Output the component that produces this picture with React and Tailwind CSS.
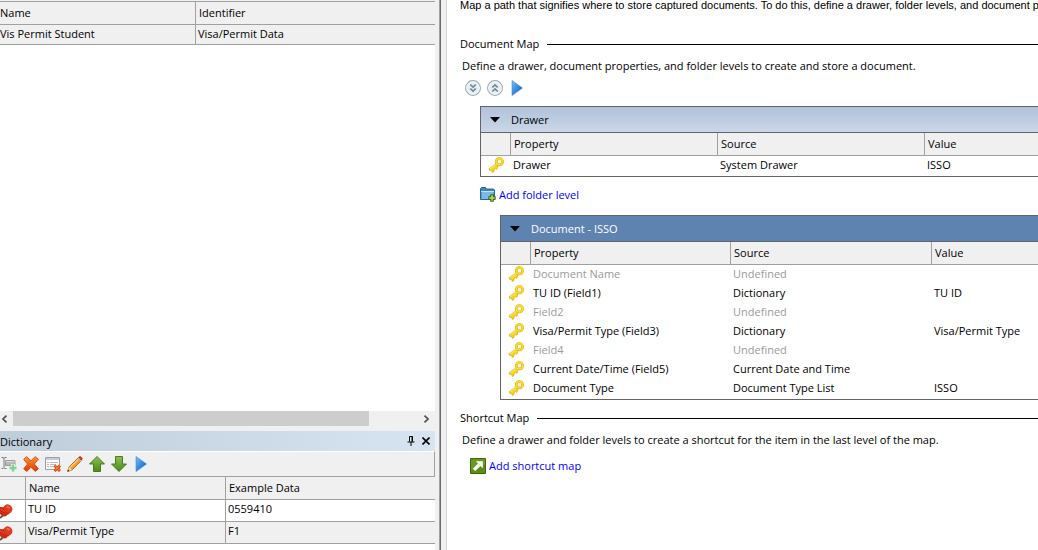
import React from 'react';

function KeyIcon() {
  return (
    <svg width="16" height="16" viewBox="0 0 16 16" className="block" aria-hidden="true">
      <path d="M8.600 6.500 1 11.800l.8 1.800 1.900-.6.5 2.400 1.800-.8v-2l1.400-1 1.300.7.8-1.200-.3-1.300 1.400-1z" fill="#f8d71e" stroke="#d9a514" strokeWidth=".7" />
      <circle cx="11.400" cy="4.700" r="3.200" fill="#fff" stroke="#d9a514" strokeWidth="2.700" />
      <circle cx="11.400" cy="4.700" r="3.200" fill="none" stroke="#fbdc26" strokeWidth="1.800" />
      <path d="M2 12l6.400-4.600" stroke="#fff08a" strokeWidth=".8" />
    </svg>
  );
}

function PushpinIcon() {
  return (
    <svg width="13" height="16" viewBox="0 0 13 16" className="block" aria-hidden="true">
      <path d="M0 15l3.400-3" stroke="#555" strokeWidth="1.800" />
      <path d="M0 4.200c2.600-.4 5 .8 6.400 3 1.500 2.500 1.300 5-.1 5.800C4.700 14 2 13.200 0 11z" fill="#cf2a12" />
      <path d="M2.600 5 5.200 2.200l6 6.600-3.400 3.200z" fill="#c9260f" />
      <ellipse cx="8.200" cy="5.700" rx="4.600" ry="4" fill="#df3a1e" transform="rotate(50 8.200 5.700)" />
      <ellipse cx="8.200" cy="4.200" rx="2" ry="1" fill="#ee6a4c" transform="rotate(30 8.200 4.200)" />
      <path d="M.2 6.200c1.800-.1 3.400 1 4.400 2.600" fill="none" stroke="#e8583a" strokeWidth=".9" />
    </svg>
  );
}

function PlayIcon() {
  return (
    <svg width="16" height="16" viewBox="0 0 16 16" aria-hidden="true">
      <defs>
        <linearGradient id="play" x1="0" y1="0" x2="1" y2="1">
          <stop offset="0" stopColor="#7cc0f4" />
          <stop offset=".55" stopColor="#2f86dc" />
          <stop offset="1" stopColor="#1a5fb8" />
        </linearGradient>
      </defs>
      <path d="M3 .5v15L13.500 8z" fill="url(#play)" stroke="#3d87cf" strokeWidth=".6" />
    </svg>
  );
}

function InsertIcon() {
  return (
    <svg width="16" height="16" viewBox="0 0 16 16" aria-hidden="true">
      <path d="M4.500 4.500h9.500v5H4.500z" fill="#b9b9b9" stroke="#9c9c9c" />
      <path d="M5 5.500h8.500" stroke="#dcdcdc" />
      <path d="M.5 1.500h1.700l.8.8.8-.8h1.700M3 2v9.500M.5 12.500h1.700l.8-.8.8.8h1.700" fill="none" stroke="#777" />
      <path d="M12 8v8M8 12h8" stroke="#e4f5e6" strokeWidth="4" />
      <path d="M12 8.500v7M8.500 12h7" stroke="#86cf92" strokeWidth="2.400" />
    </svg>
  );
}

function DeleteIcon() {
  return (
    <svg width="16" height="16" viewBox="0 0 16 16" aria-hidden="true">
      <defs>
        <linearGradient id="cross" x1="0" y1="0" x2="0" y2="1">
          <stop offset="0" stopColor="#ff9a3d" />
          <stop offset=".5" stopColor="#f26417" />
          <stop offset="1" stopColor="#d63b08" />
        </linearGradient>
      </defs>
      <path d="M3.600.6 8 4.800 12.200.6l3.200 2.600L11.400 8l4 4.700-3 2.800L8 11.300l-4.300 4.200L.6 12.800 4.500 8 .6 3.400z" fill="url(#cross)" stroke="#c9430f" strokeWidth=".8" />
    </svg>
  );
}

function ClearListIcon() {
  return (
    <svg width="16" height="16" viewBox="0 0 16 16" aria-hidden="true">
      <path d="M.5 1.500h14v12H.5z" fill="#fbfbfb" stroke="#9aa0aa" />
      <path d="M1 2h13v2H1z" fill="#c5ccd8" />
      <path d="M2.500 6.500h1M2.500 8.500h1M2.500 10.500h1" stroke="#777" />
      <path d="M5 6.500h8M5 8.500h6M5 10.500h4" stroke="#bbb" />
      <path d="M9.500 9.500l5.500 5.500M15 9.500 9.500 15" stroke="#d63b08" strokeWidth="2.800" />
      <path d="M9.700 9.500l5 5M14.800 9.500l-5 5" stroke="#f77a28" strokeWidth="1.200" />
    </svg>
  );
}

function PencilIcon() {
  return (
    <svg width="16" height="16" viewBox="0 0 16 16" aria-hidden="true">
      <path d="M.6 15.400 2 11 11 2l3 3-9 9z" fill="#f59c28" stroke="#a55c14" strokeWidth=".8" />
      <path d="M2.900 11.700l8.600-8.600" stroke="#ffd27a" strokeWidth="1.200" />
      <path d="M.6 15.400 2 11l3 3z" fill="#f3d5a4" />
      <path d="M.4 15.600l.7-2.200 1.500 1.500z" fill="#222" />
      <path d="M10.600 2.400l1-1 3 3-1 1z" fill="#c9cdd3" stroke="#888" strokeWidth=".5" />
      <path d="M11.600 1.400 12.800.5c.7-.4 2.800 1.600 2.500 2.500l-.9 1.200z" fill="#d9362a" stroke="#9b2018" strokeWidth=".5" />
    </svg>
  );
}

function ArrowIcon({ down }) {
  return (
    <svg width="16" height="16" viewBox="0 0 16 16" aria-hidden="true">
      <defs>
        <linearGradient id={down ? 'arrowDown' : 'arrowUp'} x1="0" y1="0" x2="0" y2="1">
          <stop offset="0" stopColor="#8fbf5a" />
          <stop offset="1" stopColor="#4a8a14" />
        </linearGradient>
      </defs>
      <path
        d={down ? 'M4.500.5h7V8H15.500L8 15.500.5 8h4z' : 'M8 .5 15.500 8h-4v7.500h-7V8h-4z'}
        fill={down ? 'url(#arrowDown)' : 'url(#arrowUp)'}
        stroke="#3d7512"
        strokeWidth=".9"
        strokeLinejoin="round"
      />
    </svg>
  );
}

function CircleChevrons({ up }) {
  return (
    <svg width="16" height="16" viewBox="0 0 16 16" aria-hidden="true">
      <circle cx="8" cy="8" r="7.400" fill="#e6eef1" stroke="#93a9b2" strokeWidth="1.100" />
      <circle cx="8" cy="8" r="6.300" fill="none" stroke="#fafcfc" strokeWidth=".8" />
      <path
        d={up ? 'M5.200 7.500 8 4.900l2.800 2.600M5.200 11.500 8 8.900l2.800 2.600' : 'M5.200 4.500 8 7.100l2.800-2.600M5.200 8.500 8 11.100l2.800-2.600'}
        fill="none"
        stroke="#6b8a96"
        strokeWidth="1.700"
      />
    </svg>
  );
}

function FolderAddIcon() {
  return (
    <svg width="16" height="16" viewBox="0 0 16 16" aria-hidden="true">
      <path d="M.5 12.500v-11l1-1h4l1 1.500h7l1 1v9.500z" fill="#3e86bf" stroke="#24679c" />
      <path d="M1.500 4.500h12v7.500h-12z" fill="#7fb8e2" />
      <path d="M1 4.500h13" stroke="#c6e2f6" />
      <path d="M12 7.300v7.400M8.300 11h7.400" stroke="#3f6a12" strokeWidth="3.600" />
      <path d="M12 8.300v5.400M9.300 11h5.400" stroke="#b4dc6c" strokeWidth="1.600" />
    </svg>
  );
}

function ShortcutIcon() {
  return (
    <svg width="16" height="16" viewBox="0 0 16 16" aria-hidden="true">
      <path d="M.5.5h15v15H.5z" fill="#5a8f14" stroke="#3f6412" />
      <path d="M1 1h14v6L1 12z" fill="#73a42c" opacity=".6" />
      <path d="M5.800 3.200h7v7l-2.300-2.300-5.300 5.200-2.400-2.400 5.300-5.200z" fill="#fff" />
    </svg>
  );
}

function ToolButton({ label, children }) {
  return (
    <button type="button" aria-label={label} className="flex size-4 shrink-0 items-center justify-center">
      {children}
    </button>
  );
}

const headCell = 'border-b border-[#a0a0a0] bg-[#f0f0f0] p-0 text-left font-normal';

function IdentifierTable() {
  return (
    <table className="w-full table-fixed border-separate border-spacing-0 border-t border-[#a0a0a0]">
      <thead>
        <tr className="h-[23px]">
          <th className={headCell + ' w-[196px] border-r'}>Name</th>
          <th className={headCell + ' pl-[3px]'}>Identifier</th>
        </tr>
      </thead>
      <tbody>
        <tr className="h-5 bg-[#f0f0f0]">
          <td className="border-r border-b border-[#a0a0a0] p-0 pb-[2px]">Vis Permit Student</td>
          <td className="border-b border-[#a0a0a0] p-0 pb-[2px] pl-[2px]">Visa/Permit Data</td>
        </tr>
      </tbody>
    </table>
  );
}

function DictionaryTable() {
  const rows = [
    ['TU ID', '0559410', 'bg-white'],
    ['Visa/Permit Type', 'F1', 'bg-[#f0f0f0]'],
  ];
  return (
    <table className="w-full table-fixed border-separate border-spacing-0">
      <thead>
        <tr className="h-[23px]">
          <th className={headCell + ' w-[26px] border-r'} aria-label="Pinned" />
          <th className={headCell + ' w-[200px] border-r pl-[3px]'}>Name</th>
          <th className={headCell + ' pl-[3px]'}>Example Data</th>
        </tr>
      </thead>
      <tbody>
        {rows.map(([name, data, bg]) => (
          <tr key={name} className={'h-[22px] ' + bg}>
            <td className="border-r border-b border-[#a0a0a0] p-0"><PushpinIcon /></td>
            <td className="border-r border-b border-[#a0a0a0] p-0 pb-1 pl-[2px]">{name}</td>
            <td className="border-b border-[#a0a0a0] p-0 pb-1 pl-[2px]">{data}</td>
          </tr>
        ))}
      </tbody>
    </table>
  );
}

function MapGroup({ title, rows, dark }) {
  const column = dark ? 'w-[200px]' : 'w-[207px]';
  const bodyCell = 'p-0 pb-[2px] pl-[2px]';
  return (
    <section className="border-y border-l border-[#646464] pb-px">
      <h3
        className={
          'flex h-[26px] items-center border-b border-[#646464] ' +
          (dark ? 'bg-[#5e83b1] text-white' : 'bg-linear-to-b from-[#b0c2da] to-[#cad7e7]')
        }
      >
        <button type="button" className="flex h-full items-center">
          <svg width="30" height="6" viewBox="0 0 30 6" aria-hidden="true">
            <path d="M9 0h10l-5 5.500z" fill="#000" />
          </svg>
          {title}
        </button>
      </h3>
      <table className="w-full table-fixed border-separate border-spacing-0">
        <thead>
          <tr className="h-[23px]">
            <th className={headCell + ' w-[30px] border-r'} aria-label="Key" />
            <th className={headCell + ' border-r pl-[3px] ' + column}>Property</th>
            <th className={headCell + ' border-r pl-[3px] ' + (dark ? 'w-[201px]' : column)}>Source</th>
            <th className={headCell + ' pl-[3px]'}>Value</th>
          </tr>
        </thead>
        <tbody>
          {rows.map(([property, source, value]) => (
            <tr key={property} className={source === 'Undefined' ? 'h-[19px] text-[#9a9a9a]' : 'h-[19px]'}>
              <td className="p-0 pb-[2px] pl-[7px]"><KeyIcon /></td>
              <td className={bodyCell}>{property}</td>
              <td className={bodyCell}>{source}</td>
              <td className={bodyCell}>{value}</td>
            </tr>
          ))}
        </tbody>
      </table>
    </section>
  );
}

function SectionTitle({ children }) {
  return (
    <h2 className="flex h-4 items-center gap-2">
      <span className="shrink-0">{children}</span>
      <span className="h-px flex-1 bg-black" />
    </h2>
  );
}

const documentRows = [
  ['Document Name', 'Undefined', ''],
  ['TU ID (Field1)', 'Dictionary', 'TU ID'],
  ['Field2', 'Undefined', ''],
  ['Visa/Permit Type (Field3)', 'Dictionary', 'Visa/Permit Type'],
  ['Field4', 'Undefined', ''],
  ['Current Date/Time (Field5)', 'Current Date and Time', ''],
  ['Document Type', 'Document Type List', 'ISSO'],
];

export default function App() {
  return (
    <div className="flex min-h-screen overflow-hidden bg-white font-['Open_Sans','Noto_Sans',sans-serif] text-[11px] leading-4 whitespace-nowrap text-black">
      <aside className="flex w-[435px] shrink-0 flex-col">
        <div className="flex-1 border-t border-[#f0f0f0]">
          <IdentifierTable />
        </div>
        <div className="flex h-[15px] bg-[#f0f0f0]">
          <button type="button" aria-label="Scroll left" className="flex w-[13px] items-center pl-px">
            <svg width="7" height="8" viewBox="0 0 7 8" aria-hidden="true"><path d="M5.500.7 2 4l3.500 3.300" fill="none" stroke="#505050" strokeWidth="1.700" /></svg>
          </button>
          <div className="flex-1"><div className="h-full w-[88%] bg-[#cdcdcd]" /></div>
          <button type="button" aria-label="Scroll right" className="flex w-[17px] items-center justify-center">
            <svg width="7" height="8" viewBox="0 0 7 8" aria-hidden="true"><path d="M1.500.7 5 4 1.500 7.300" fill="none" stroke="#505050" strokeWidth="1.700" /></svg>
          </button>
        </div>
        <section className="border-t-5 border-[#f0f0f0] pb-[6px]">
          <div className="flex h-5 items-center bg-linear-to-r from-[#bfcddb] to-[#d7e4f2]">
            <h2 className="flex-1 pt-px">Dictionary</h2>
            <button type="button" aria-label="Pin panel" className="mr-[7px]">
              <svg width="8" height="10" viewBox="0 0 8 10" aria-hidden="true"><path d="M2.500 5.500v-5h3v5M5 0v6M.5 6h7M4 6v4" fill="none" stroke="#000" /></svg>
            </button>
            <button type="button" aria-label="Close panel" className="mr-[5px]">
              <svg width="8" height="8" viewBox="0 0 8 8" aria-hidden="true"><path d="M.5.500l7 7M7.500.500l-7 7" stroke="#000" strokeWidth="1.600" /></svg>
            </button>
          </div>
          <div className="flex h-[26px] items-center gap-[6px] border-t border-r border-b border-t-white border-r-[#a0a0a0] border-b-[#a0a0a0] bg-[#f0f0f0] pl-px">
            <ToolButton label="Insert field"><InsertIcon /></ToolButton>
            <ToolButton label="Delete"><DeleteIcon /></ToolButton>
            <ToolButton label="Clear list"><ClearListIcon /></ToolButton>
            <ToolButton label="Edit"><PencilIcon /></ToolButton>
            <ToolButton label="Move up"><ArrowIcon /></ToolButton>
            <ToolButton label="Move down"><ArrowIcon down /></ToolButton>
            <ToolButton label="Run"><PlayIcon /></ToolButton>
          </div>
          <DictionaryTable />
        </section>
      </aside>

      <div className="w-[6px] shrink-0 border-l-4 border-[#f0f0f0] bg-[#a0a0a0]"><div className="ml-px h-full bg-[#696969]" /></div>
      <div className="w-[6px] shrink-0 border-r border-[#d4d4d4] bg-[#f0f0f0]" />

      <main className="min-w-0 flex-1 overflow-hidden pl-[13px]">
        <p className="-mt-[3px] font-['Liberation_Sans',Arial,sans-serif]">
          Map a path that signifies where to store captured documents. To do this, define a drawer, folder levels, and document properties.
        </p>
        <div className="pt-[23px]"><SectionTitle>Document Map</SectionTitle></div>
        <p className="pt-[6px] pl-[2px]">Define a drawer, document properties, and folder levels to create and store a document.</p>
        <div className="flex gap-[6px] pt-[6px] pl-[5px]">
          <ToolButton label="Expand all"><CircleChevrons /></ToolButton>
          <ToolButton label="Collapse all"><CircleChevrons up /></ToolButton>
          <ToolButton label="Run map"><PlayIcon /></ToolButton>
        </div>
        <div className="pt-[10px] pl-5">
          <MapGroup title="Drawer" rows={[['Drawer', 'System Drawer', 'ISSO']]} />
          <a href="#folder" className="mt-[10px] inline-flex items-center gap-[3px] align-top text-[#0000ff]">
            <FolderAddIcon />
            Add folder level
          </a>
          <div className="pt-3 pl-5">
            <MapGroup title="Document - ISSO" rows={documentRows} dark />
          </div>
        </div>
        <div className="pt-[10px]"><SectionTitle>Shortcut Map</SectionTitle></div>
        <p className="pt-[6px] pl-[2px]">Define a drawer and folder levels to create a shortcut for the item in the last level of the map.</p>
        <a href="#shortcut" className="mt-[10px] ml-[10px] inline-flex items-center gap-[3px] text-[#0000ff]">
          <ShortcutIcon />
          Add shortcut map
        </a>
      </main>
    </div>
  );
}
